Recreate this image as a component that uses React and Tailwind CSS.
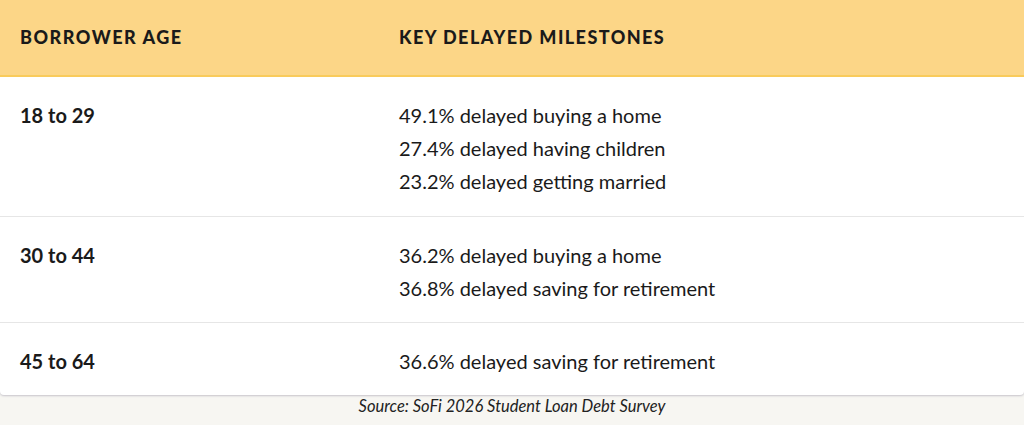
const rows = [
  {
    age: '18 to 29',
    items: ['49.1% delayed buying a home', '27.4% delayed having children', '23.2% delayed getting married'],
    pad: 'pb-[18px] border-b border-[#e6e6e6]',
  },
  {
    age: '30 to 44',
    items: ['36.2% delayed buying a home', '36.8% delayed saving for retirement'],
    pad: 'pb-[17px] border-b border-[#e6e6e6]',
  },
  {
    age: '45 to 64',
    items: ['36.6% delayed saving for retirement'],
    pad: 'pb-[17px]',
  },
];

export default function App() {
  return (
    <div className="w-[1024px] h-[425px] bg-[#f7f6f2] text-[#1a1a1a] font-['Lato',_'Open_Sans',_sans-serif] overflow-hidden">
      <div className="bg-white rounded-b-[4px] shadow-[0_1px_2px_rgba(60,50,90,0.25)]">
        <div className="flex h-[77px] items-center bg-[#fcd687] border-b-2 border-[#f9cb5b]">
          <div className="w-[399px] pl-5 text-[18px] font-black tracking-[0.085em]">BORROWER AGE</div>
          <div className="text-[18px] font-black tracking-[0.08em]">KEY DELAYED MILESTONES</div>
        </div>
        {rows.map(r => (
          <div key={r.age} className={`flex pt-[22px] ${r.pad}`}>
            <div className="w-[399px] pl-5 text-[20px] leading-[33px] font-bold">{r.age}</div>
            <div className="flex flex-col text-[20px] leading-[33px]">
              {r.items.map(t => <span key={t}>{t}</span>)}
            </div>
          </div>
        ))}
      </div>
      <p className="text-center italic text-[16.5px] leading-[22px] text-[#222]">Source: SoFi 2026 Student Loan Debt Survey</p>
    </div>
  );
}
